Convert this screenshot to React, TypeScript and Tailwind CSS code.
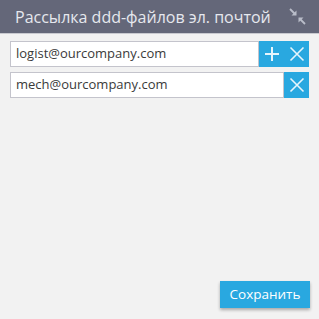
import React from "react";

const Plus = () => (
  <svg width="16" height="16" viewBox="0 0 16 16" fill="none" stroke="#e6f5fc" strokeWidth="2">
    <path d="M8 1v14M1 8h14" />
  </svg>
);
const Cross = () => (
  <svg width="16" height="16" viewBox="0 0 16 16" fill="none" stroke="#e6f5fc" strokeWidth="1.6">
    <path d="M1.5 1.5l13 13M14.5 1.5l-13 13" />
  </svg>
);

const Row = ({ email, plus }: { email: string; plus?: boolean }) => (
  <div className="flex h-[26px]">
    <div className="flex-1 border border-[#c4c4cc] bg-white flex items-center pl-[5px] text-[13px] text-[#3a3a3a]">
      {email}
    </div>
    {plus && (
      <button className="w-[25px] bg-[#29a8e0] flex items-center justify-center">
        <Plus />
      </button>
    )}
    <button className="w-[25px] bg-[#29a8e0] flex items-center justify-center">
      <Cross />
    </button>
  </div>
);

export default function App() {
  return (
    <div
      className="w-[319px] h-[319px] bg-[#f2f2f2] flex flex-col"
      style={{ fontFamily: '"Open Sans", sans-serif' }}
    >
      <div className="h-[34px] bg-[#646779] flex items-center justify-between pl-[15px] pr-[13px] border-b border-[#c9cad0]">
        <span className="text-[16px] text-[#e6e8ee]">Рассылка ddd-файлов эл. почтой</span>
        <svg width="17" height="17" viewBox="0 0 17 17" fill="#b9bdc9" stroke="#b9bdc9">
          <path d="M1 1l4.5 4.5" strokeWidth="1.8" fill="none" />
          <path d="M2.5 7.5h5v-5z" stroke="none" />
          <path d="M16 16l-4.5-4.5" strokeWidth="1.8" fill="none" />
          <path d="M14.5 9.5h-5v5z" stroke="none" />
        </svg>
      </div>
      <div className="flex-1 flex flex-col px-[10px] pt-[7px] gap-[5px]">
        <Row email="logist@ourcompany.com" plus />
        <Row email="mech@ourcompany.com" />
      </div>
      <div className="flex justify-end pr-[9px] pb-[11px]">
        <button className="h-[27px] w-[90px] bg-[#29a8e0] text-white text-[13.5px] shadow-[0_2px_3px_rgba(0,0,0,0.3)]">
          Сохранить
        </button>
      </div>
    </div>
  );
}
